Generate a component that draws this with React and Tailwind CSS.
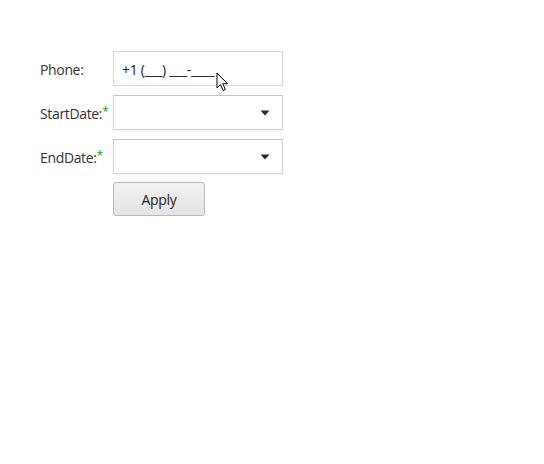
import React from 'react';

function Caret() {
  return (
    <svg width="10" height="6" viewBox="0 0 10 6" className="block">
      <path d="M0.5 0.5 L9.5 0.5 L5 5.5 Z" fill="#2b2b2b" />
    </svg>
  );
}

function Label({ text, required }) {
  return (
    <div className="flex items-center pt-[1px] text-[14px] tracking-[-0.35px] text-[#333]">
      <span>{text}</span>
      {required && <span className="text-[#1a9a1a] text-[12px] -mt-0.5">*</span>}
    </div>
  );
}

function DropBox() {
  return (
    <div className="h-[35px] w-[170px] border border-[#d4d4d4] border-t-[#c4c4c4] bg-white shadow-[0_1px_2px_rgba(0,0,0,0.06)] flex items-center justify-end pr-[12px]">
      <Caret />
    </div>
  );
}

export default function App() {
  return (
    <div className="relative w-[544px] h-[464px] bg-white" style={{ fontFamily: '"Open Sans", "Noto Sans", sans-serif' }}>
      <div className="pl-[40px] pt-[51px] grid grid-cols-[73px_170px] gap-y-[9px] items-center">
        <Label text="Phone:" />
        <div className="h-[35px] w-[170px] border border-[#d6d6d6] bg-white flex items-center pl-[8px] pt-[1px] text-[14px] text-[#222] tracking-[-0.3px]">
          +1 (___) ___-____
        </div>
        <Label text="StartDate:" required />
        <DropBox />
        <Label text="EndDate:" required />
        <DropBox />
        <div />
        <div className="-mt-px">
          <button className="h-[34px] w-[92px] rounded-[3px] border border-[#b8b8b8] bg-gradient-to-b from-[#f2f2f2] to-[#e4e4e4] text-[14px] tracking-[-0.3px] text-[#222]">
            Apply
          </button>
        </div>
      </div>
      <svg className="absolute left-[216px] top-[72px]" width="13" height="20" viewBox="0 0 13 20">
        <path d="M1 1 L1 16 L4.5 12.5 L7 18.5 L9.3 17.5 L6.8 11.7 L11.5 11.7 Z" fill="#fff" stroke="#000" strokeWidth="1" strokeLinejoin="round" />
      </svg>
    </div>
  );
}
